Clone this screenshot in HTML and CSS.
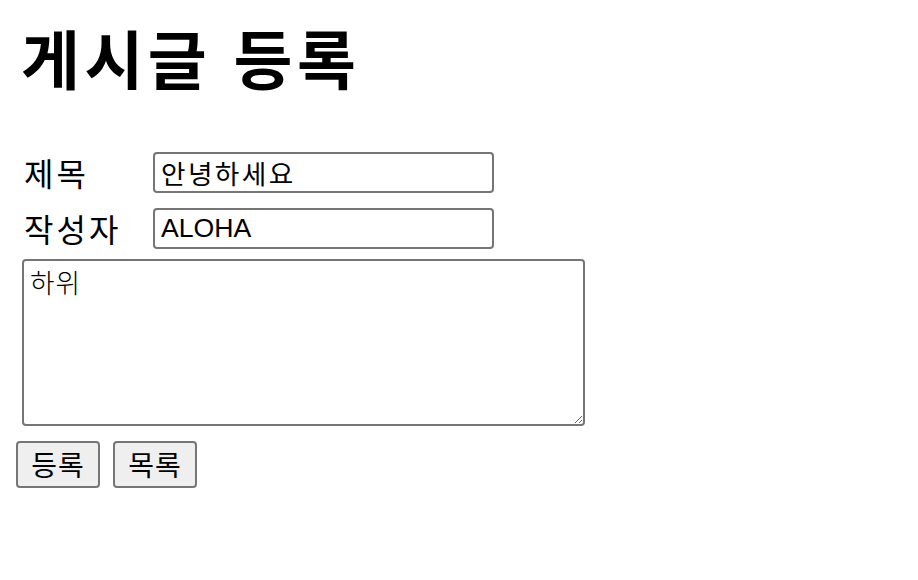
FILE: index.html
```html
<!DOCTYPE html>
<html lang="ko">
<head>
<meta charset="utf-8">
<title>게시글 등록</title>
<link rel="stylesheet" href="styles.css">
</head>
<body>
<h1 class="title">게시글 등록</h1>
<form class="post-form">
  <div class="fields">
    <div class="row">
      <label class="label" for="title">제목</label>
      <input class="text-input text-input--ko" id="title" type="text" value="안녕하세요">
    </div>
    <div class="row">
      <label class="label" for="writer">작성자</label>
      <input class="text-input" id="writer" type="text" value="ALOHA">
    </div>
    <textarea class="content">하위</textarea>
  </div>
  <div class="actions">
    <button class="btn" type="button">등록</button>
    <button class="btn" type="button">목록</button>
  </div>
</form>
</body>
</html>
```
FILE: styles.css
```css
html, body {
  margin: 0;
  padding: 0;
  background: #ffffff;
}
body {
  padding: 16px;
  font-family: "Noto Sans CJK KR", "Liberation Sans", sans-serif;
  color: #000;
}
.title {
  margin: 0;
  padding-top: 2px;
  padding-left: 5px;
  font-size: 64px;
  line-height: 76px;
  font-weight: 700;
  letter-spacing: 4.5px;
}
.post-form {
  margin-top: 58px;
}
.fields {
  padding-left: 6px;
  display: flex;
  flex-direction: column;
  align-items: flex-start;
}
.row {
  display: flex;
  align-items: center;
  height: 41px;
  margin-bottom: 15px;
}
.row + .row {
  margin-bottom: 10px;
}
.label {
  width: 131px;
  padding-left: 2px;
  box-sizing: border-box;
  font-size: 32px;
  line-height: 41px;
  font-family: "Noto Sans CJK KR", sans-serif;
  font-weight: 400;
  letter-spacing: 3px;
}
.text-input {
  box-sizing: border-box;
  width: 341px;
  height: 41px;
  margin: 0;
  padding: 2px 6px;
  border: 2px solid #767676;
  border-radius: 4px;
  font-family: "Liberation Sans", "Noto Sans CJK KR", sans-serif;
  font-size: 26.67px;
  color: #000;
  background: #fff;
}
.text-input--ko {
  letter-spacing: 2.4px;
}
.content {
  box-sizing: border-box;
  width: 563px;
  height: 167px;
  margin: 0;
  padding: 4px 6px;
  border: 2px solid #767676;
  border-radius: 4px;
  font-family: "Noto Sans CJK KR", monospace;
  font-weight: 300;
  font-size: 26.67px;
  line-height: 34px;
  color: #000;
  background: #fff;
  letter-spacing: 1px;
}
.actions {
  display: flex;
  gap: 13px;
  margin-top: 15px;
}
.btn {
  box-sizing: border-box;
  width: 84px;
  height: 47px;
  margin: 0;
  padding: 0;
  white-space: nowrap;
  border: 2px solid #767676;
  border-radius: 4px;
  background: #efefef;
  font-family: "Noto Sans CJK KR", sans-serif;
  font-size: 28px;
  line-height: 43px;
  color: #000;
  letter-spacing: 1px;
}
```
